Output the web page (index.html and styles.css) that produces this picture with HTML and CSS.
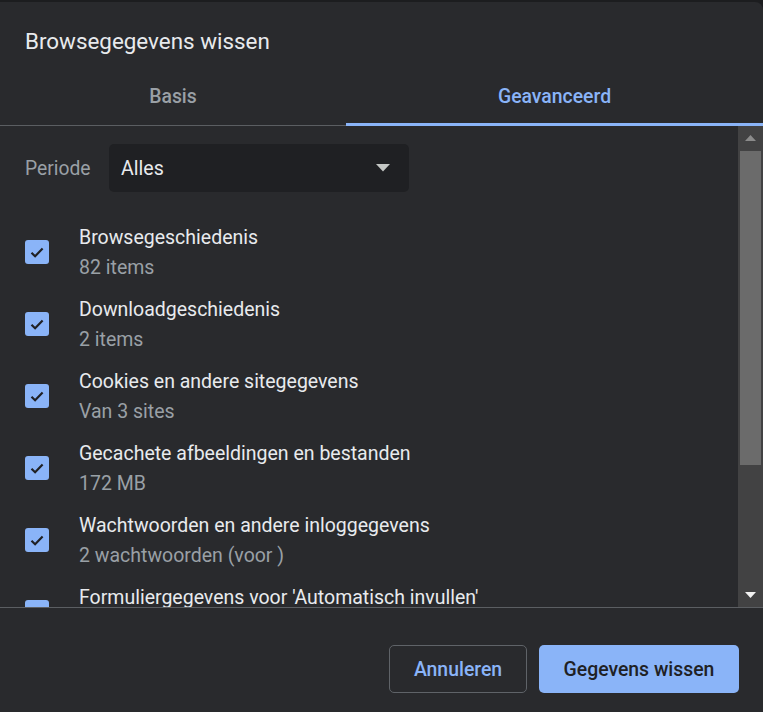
FILE: index.html
```
<!DOCTYPE html>
<html lang="nl">
<head>
<meta charset="utf-8">
<title>Browsegegevens wissen</title>
<link rel="stylesheet" href="styles.css">
</head>
<body>
<div class="dialog">
  <div class="title">Browsegegevens wissen</div>
  <div class="tabs">
    <div class="tab tab-basic">Basis</div>
    <div class="tab tab-active">Geavanceerd</div>
  </div>
  <div class="body">
    <div class="content">
      <div class="period">
        <span class="period-label">Periode</span>
        <div class="select">
          <span>Alles</span>
          <svg class="select-arrow" width="14" height="8" viewBox="0 0 14 8"><path d="M0 0h14L7 7.5z" fill="#c4c7c5"/></svg>
        </div>
      </div>
      <div class="item">
        <span class="check"><svg width="14" height="11" viewBox="0 0 14 11"><path d="M1.5 5.8l3.6 3.4L12.6 1.6" fill="none" stroke="#202124" stroke-width="2.2"/></svg></span>
        <div class="item-text"><div class="item-title">Browsegeschiedenis</div><div class="item-sub">82 items</div></div>
      </div>
      <div class="item">
        <span class="check"><svg width="14" height="11" viewBox="0 0 14 11"><path d="M1.5 5.8l3.6 3.4L12.6 1.6" fill="none" stroke="#202124" stroke-width="2.2"/></svg></span>
        <div class="item-text"><div class="item-title">Downloadgeschiedenis</div><div class="item-sub">2 items</div></div>
      </div>
      <div class="item">
        <span class="check"><svg width="14" height="11" viewBox="0 0 14 11"><path d="M1.5 5.8l3.6 3.4L12.6 1.6" fill="none" stroke="#202124" stroke-width="2.2"/></svg></span>
        <div class="item-text"><div class="item-title">Cookies en andere sitegegevens</div><div class="item-sub">Van 3 sites</div></div>
      </div>
      <div class="item">
        <span class="check"><svg width="14" height="11" viewBox="0 0 14 11"><path d="M1.5 5.8l3.6 3.4L12.6 1.6" fill="none" stroke="#202124" stroke-width="2.2"/></svg></span>
        <div class="item-text"><div class="item-title">Gecachete afbeeldingen en bestanden</div><div class="item-sub">172 MB</div></div>
      </div>
      <div class="item">
        <span class="check"><svg width="14" height="11" viewBox="0 0 14 11"><path d="M1.5 5.8l3.6 3.4L12.6 1.6" fill="none" stroke="#202124" stroke-width="2.2"/></svg></span>
        <div class="item-text"><div class="item-title">Wachtwoorden en andere inloggegevens</div><div class="item-sub">2 wachtwoorden (voor )</div></div>
      </div>
      <div class="item">
        <span class="check"><svg width="14" height="11" viewBox="0 0 14 11"><path d="M1.5 5.8l3.6 3.4L12.6 1.6" fill="none" stroke="#202124" stroke-width="2.2"/></svg></span>
        <div class="item-text"><div class="item-title">Formuliergegevens voor 'Automatisch invullen'</div></div>
      </div>
    </div>
    <div class="scrollbar">
      <div class="sb-btn"><svg width="11" height="6" viewBox="0 0 11 6"><path d="M0 6L5.5 0 11 6z" fill="#8b8b8b"/></svg></div>
      <div class="sb-track"><div class="sb-thumb"></div></div>
      <div class="sb-btn"><svg width="11" height="6" viewBox="0 0 11 6"><path d="M0 0h11L5.5 6z" fill="#f1f1f1"/></svg></div>
    </div>
  </div>
  <div class="footer">
    <button class="btn btn-cancel">Annuleren</button>
    <button class="btn btn-primary">Gegevens wissen</button>
  </div>
</div>
</body>
</html>
```
FILE: styles.css
```
* { box-sizing: border-box; }
html, body { margin: 0; padding: 0; }
body {
  background: #1c1d1f;
  font-family: Roboto, "Liberation Sans", sans-serif;
  width: 763px;
  height: 712px;
  overflow: hidden;
}
.dialog {
  margin-top: 2px;
  height: 710px;
  background: #292a2d;
  border-top-right-radius: 8px;
  display: flex;
  flex-direction: column;
}
.title {
  padding: 26px 25px 0;
  font-size: 22.4px;
  line-height: 26px;
  color: #e8eaed;
  height: 64px;
}
.tabs {
  display: flex;
  height: 60px;
  border-bottom: 1px solid #5b5e62;
}
.tab {
  display: flex;
  align-items: center;
  justify-content: center;
  font-size: 19.4px;
  font-weight: 500;
  padding-top: 1px;
}
.tab-basic {
  width: 346px;
  color: #9aa0a6;
}
.tab-active {
  flex: 1;
  color: #8ab4f8;
  border-bottom: 3px solid #8ab4f8;
  padding-top: 3px;
  margin-bottom: -1px;
}
.body {
  height: 482px;
  display: flex;
  border-bottom: 1px solid #5b5e62;
}
.content {
  flex: 1;
  overflow: hidden;
  padding: 18px 0 0 25px;
}
.period {
  display: flex;
  align-items: center;
  height: 48px;
  margin-bottom: 24px;
}
.period-label {
  font-size: 19.3px;
  color: #9aa0a6;
  width: 84px;
}
.select {
  width: 300px;
  height: 48px;
  background: #1f2023;
  border-radius: 5px;
  display: flex;
  align-items: center;
  justify-content: space-between;
  padding: 0 12px 0 12px;
  font-size: 19.6px;
  color: #e8eaed;
}
.select-arrow { margin-right: 7px; }
.item {
  display: flex;
  align-items: center;
  height: 72px;
}
.check {
  width: 24px;
  height: 24px;
  border-radius: 3px;
  background: #8ab4f8;
  display: flex;
  align-items: center;
  justify-content: center;
  margin-right: 30px;
  flex-shrink: 0;
}
.item-text {
  display: flex;
  flex-direction: column;
  white-space: nowrap;
  align-self: flex-start;
  padding-top: 7px;
}
.item-title {
  font-size: 19.5px;
  line-height: 30px;
  color: #e8eaed;
}
.item-sub {
  font-size: 19.5px;
  line-height: 30px;
  color: #9aa0a6;
}
.scrollbar {
  width: 25px;
  background: #424243;
  display: flex;
  flex-direction: column;
}
.sb-btn {
  height: 24px;
  display: flex;
  align-items: center;
  justify-content: center;
}
.sb-track {
  flex: 1;
  padding: 1px 2px 0;
}
.sb-thumb {
  height: 314px;
  background: #6b6b6b;
}
.footer {
  flex: 1;
  display: flex;
  justify-content: flex-end;
  align-items: flex-start;
  padding: 37px 24px 0 0;
  gap: 12px;
}
.btn {
  height: 48px;
  border-radius: 5px;
  font-family: Roboto, "Liberation Sans", sans-serif;
  font-size: 19.4px;
  font-weight: 500;
  padding-top: 2px;
  cursor: pointer;
}
.btn-cancel {
  width: 138px;
  background: transparent;
  border: 1px solid #5f6368;
  color: #8ab4f8;
}
.btn-primary {
  width: 200px;
  background: #8ab4f8;
  border: none;
  color: #202124;
}
```
